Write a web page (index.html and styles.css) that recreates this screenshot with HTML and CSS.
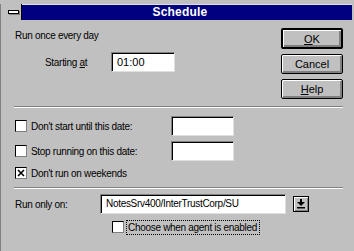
FILE: index.html
```html
<!DOCTYPE html>
<html lang="en">
  <head>
    <meta charset="UTF-8" />
    <meta name="viewport" content="width=device-width, initial-scale=1.0" />
    <title>Schedule</title>
    <link rel="stylesheet" href="styles.css">
  </head>
  <body>
    <div class="window">
      <div class="titlebar">
        <div class="sysmenu"><span class="sysbar"></span></div>
        <div class="caption">Schedule</div>
      </div>

      <div class="dialog">
        <div class="top">
          <div class="top-left">
            <div class="intro">Run once every day</div>
            <div class="start-row">
              <label class="start-label">Starting <u>a</u>t</label>
              <div class="field start-field">01:00</div>
            </div>
          </div>
          <div class="buttons">
            <button class="btn default"><u>O</u>K</button>
            <button class="btn">Cancel</button>
            <button class="btn"><u>H</u>elp</button>
          </div>
        </div>

        <div class="separator"></div>

        <div class="checks">
          <div class="check-row">
            <div class="check-label"><span class="checkbox"></span>Don't start until this date:</div>
            <div class="field date-field"></div>
          </div>
          <div class="check-row">
            <div class="check-label"><span class="checkbox"></span>Stop running on this date:</div>
            <div class="field date-field"></div>
          </div>
          <div class="check-row short">
            <div class="check-label">
              <span class="checkbox">
                <svg width="8" height="8" viewBox="0 0 8 8"><path d="M1 1 L7 7 M7 1 L1 7" stroke="#000" stroke-width="1.6"/></svg>
              </span>Don't run on weekends
            </div>
          </div>
        </div>

        <div class="separator second"></div>

        <div class="server-row">
          <div class="server-label">Run only on:</div>
          <div class="field server-field">NotesSrv400/InterTrustCorp/SU</div>
          <button class="drop-btn">
            <svg width="8" height="10" viewBox="0 0 8 10">
              <rect x="3" y="0" width="2" height="3" fill="#000"/>
              <path d="M0 3 H8 L4 7 Z" fill="#000"/>
              <rect x="0" y="8" width="8" height="1.5" fill="#000"/>
            </svg>
          </button>
        </div>

        <div class="agent-row">
          <span class="checkbox"></span>
          <span class="focus">Choose when agent is enabled</span>
        </div>
      </div>
    </div>
  </body>
</html>
```

FILE: styles.css
```css
body,
html {
  margin: 0;
  height: 100%;
  overflow: hidden;
  background: #c0c0c0;
  font-family: "Liberation Sans", Arial, sans-serif;
  font-size: 10px;
  letter-spacing: -0.3px;
  color: #000;
}
.window {
  box-sizing: border-box;
  width: 354px;
  height: 250px;
  border-left: 1px solid #808080;
  border-bottom: 2px solid #000;
  background: #c0c0c0;
}
.titlebar {
  display: flex;
  height: 16px;
  margin: 4px 2px 0 4px;
}
.sysmenu {
  box-sizing: border-box;
  width: 17px;
  display: flex;
  align-items: center;
  justify-content: center;
  background: #c0c0c0;
  border-right: 1px solid #000;
}
.sysbar {
  display: block;
  width: 9px;
  height: 2px;
  background: #fff;
  border: 1px solid #000;
  box-shadow: 1px 1px #808080;
}
.caption {
  flex: 1;
  box-sizing: border-box;
  background: #000080;
  color: #fff;
  font-weight: bold;
  font-size: 12px;
  letter-spacing: 0.2px;
  line-height: 14px;
  text-align: center;
  padding-right: 14px;
  border-top: 1px solid #dfdfdf;
}
.dialog {
  padding: 8px 11px 0 13px;
}
.top {
  display: flex;
  justify-content: space-between;
}
.intro {
  margin: 2px 0 0 1px;
  line-height: 12px;
}
.start-row {
  display: flex;
  align-items: center;
  margin-top: 10px;
}
.start-label {
  box-sizing: border-box;
  width: 97px;
  padding-left: 31px;
}
.field {
  box-sizing: border-box;
  height: 20px;
  background: #fff;
  border: 1px solid;
  border-color: #808080 #dfdfdf #dfdfdf #808080;
  box-shadow: inset 1px 1px #000;
  padding: 3px 4px 0 5px;
  white-space: nowrap;
  overflow: hidden;
}
.start-field {
  width: 64px;
  font-size: 11px;
  letter-spacing: 0;
}
.buttons {
  display: flex;
  flex-direction: column;
  gap: 5px;
  width: 62px;
}
.btn {
  box-sizing: border-box;
  height: 20px;
  padding: 0;
  background: #c0c0c0;
  border: 1px solid #000;
  border-radius: 2px;
  box-shadow: inset 1px 1px #fff, inset -2px -2px #808080;
  font-family: "Liberation Sans", Arial, sans-serif;
  font-size: 11px;
  font-weight: normal;
  letter-spacing: 0;
  color: #000;
}
.btn.default {
  border-width: 2px;
  height: 21px;
}
.separator {
  height: 0;
  margin-top: 7px;
  border-top: 1px solid #808080;
  border-bottom: 1px solid #fff;
}
.separator.second {
  margin-top: 6px;
}
.checks {
  display: flex;
  flex-direction: column;
  gap: 5px;
  margin-top: 8px;
}
.check-row {
  display: flex;
  align-items: center;
  height: 20px;
}
.check-row.short {
  height: 16px;
  margin-top: -1px;
}
.check-label {
  display: flex;
  align-items: center;
  width: 157px;
}
.checkbox {
  box-sizing: border-box;
  display: flex;
  align-items: center;
  justify-content: center;
  width: 12px;
  height: 12px;
  margin: 0 4px 0 1px;
  background: #fff;
  border: 1px solid;
  border-color: #000 #808080 #808080 #000;
}
.date-field {
  width: 63px;
}
.server-row {
  display: flex;
  align-items: center;
  margin-top: 5px;
}
.server-label {
  box-sizing: border-box;
  width: 86px;
  padding-left: 1px;
}
.server-field {
  width: 186px;
}
.drop-btn {
  box-sizing: border-box;
  width: 16px;
  height: 16px;
  margin-left: 7px;
  padding: 0;
  display: flex;
  align-items: center;
  justify-content: center;
  background: #c0c0c0;
  border: 1px solid #000;
  box-shadow: inset 1px 1px #fff, inset -1px -1px #808080;
}
.agent-row {
  display: flex;
  align-items: center;
  height: 14px;
  margin-top: 6px;
  padding-left: 98px;
}
.agent-row .checkbox {
  margin: 0 3px 0 0;
}
.focus {
  outline: 1px dotted #000;
  padding: 0 2px 0 1px;
  line-height: 13px;
}
```
